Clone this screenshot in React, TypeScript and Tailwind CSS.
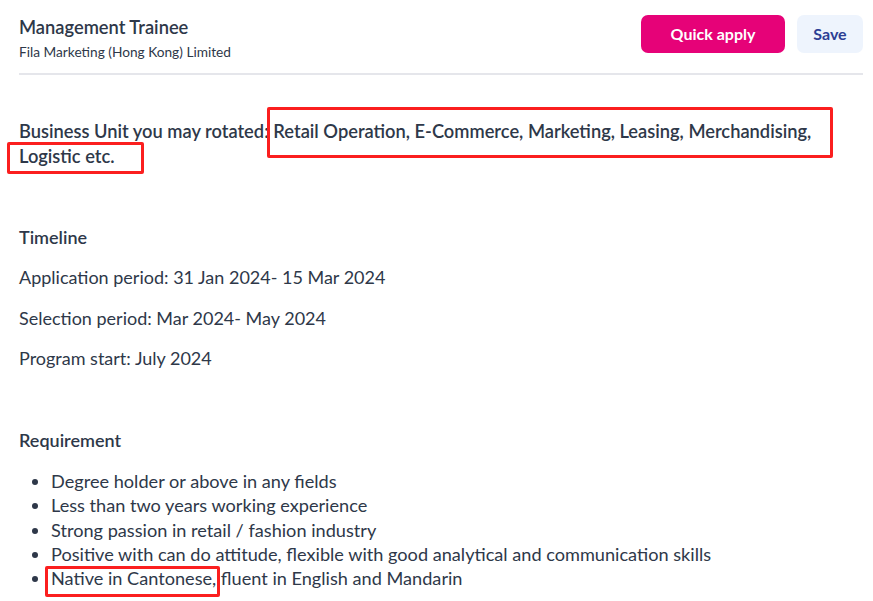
import React from "react";

const font = { fontFamily: '"Lato", "Liberation Sans", sans-serif' };

const requirements = [
  "Degree holder or above in any fields",
  "Less than two years working experience",
  "Strong passion in retail / fashion industry",
  "Positive with can do attitude, flexible with good analytical and communication skills",
  "Native in Cantonese, fluent in English and Mandarin",
];

// red callout drawn over a piece of the description
function Mark({ className }: { className: string }) {
  return (
    <div
      className={`absolute border-[3px] border-[#fb1f1f] rounded-[2px] pointer-events-none ${className}`}
    />
  );
}

export default function App() {
  return (
    <div
      className="relative w-[873px] h-[601px] bg-white text-[#2e3849] overflow-hidden"
      style={font}
    >
      <div className="pl-[19px] pr-[10px]">
        <div className="h-[75px] flex justify-between items-start pt-[15px] border-b-2 border-[#e5e6eb]">
          <div className="pt-[1px]">
            <h1 className="text-[18.3px] leading-[22px] font-semibold">
              Management Trainee
            </h1>
            <p className="text-[13.7px] leading-[18px] mt-[5px]">
              Fila Marketing (Hong Kong) Limited
            </p>
          </div>
          <div className="flex gap-3">
            <button className="h-[38px] w-[144px] rounded-[7px] bg-[#e60278] text-white text-[16px] font-bold">
              Quick apply
            </button>
            <button className="h-[38px] w-[66px] rounded-[7px] bg-[#eef4fd] text-[#2c3e94] text-[16px] font-bold">
              Save
            </button>
          </div>
        </div>

        <p className="mt-[44px] text-[18.3px] leading-[25px] font-semibold">
          Business Unit you may rotated: Retail Operation, E-Commerce,
          Marketing, Leasing, Merchandising, Logistic etc.
        </p>

        <h2 className="mt-[56px] text-[18px] leading-[25px] font-semibold">
          Timeline
        </h2>
        <div className="mt-[15px] flex flex-col gap-[15.5px] text-[18px] leading-[25px]">
          <p>Application period: 31 Jan 2024- 15 Mar 2024</p>
          <p>Selection period: Mar 2024- May 2024</p>
          <p>Program start: July 2024</p>
        </div>

        <h2 className="mt-[57px] text-[18px] leading-[25px] font-semibold">
          Requirement
        </h2>
        <ul className="mt-[16px] pl-[32px] list-disc text-[18.15px] leading-[24.25px]">
          {requirements.map((r) => (
            <li key={r}>{r}</li>
          ))}
        </ul>
      </div>

      <Mark className="left-[267px] top-[107px] w-[566px] h-[51px]" />
      <Mark className="left-[7px] top-[142px] w-[137px] h-[32px]" />
      <Mark className="left-[45px] top-[566px] w-[175px] h-[31px]" />
    </div>
  );
}
